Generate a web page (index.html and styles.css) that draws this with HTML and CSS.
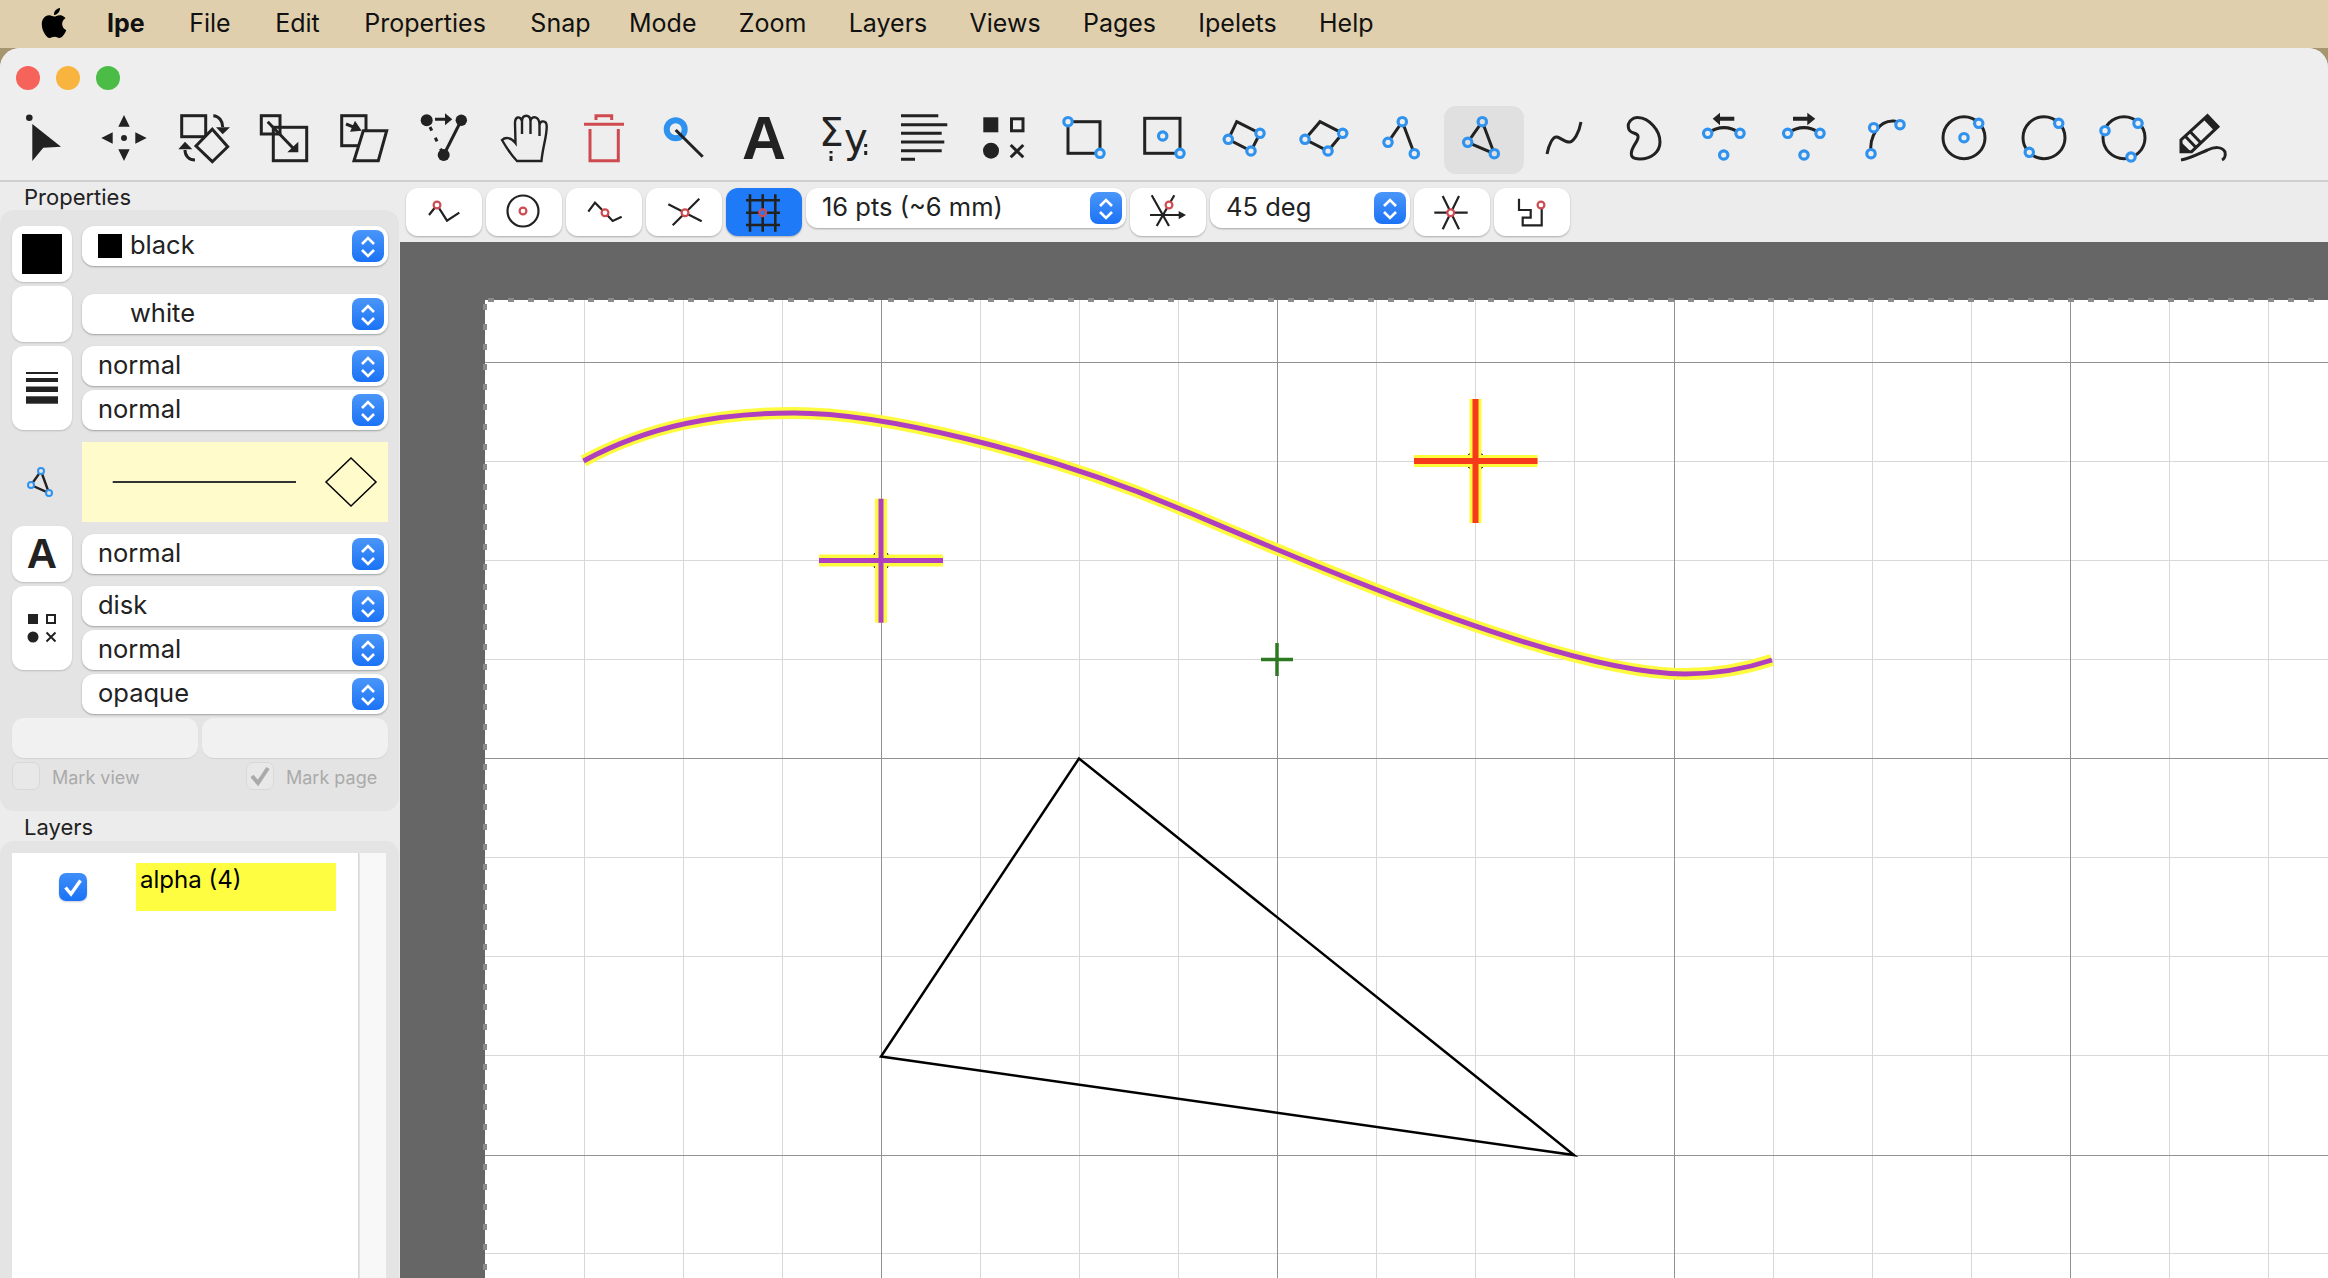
FILE: index.html
```html
<!DOCTYPE html>
<html lang="en">
  <head>
    <title>Ipe</title>
    <link rel="stylesheet" href="styles.css">
  </head>

  <body>
    <svg class="defs" width="0" height="0">
      <symbol id="chev" viewBox="0 0 32 32">
        <path d="M10 14 L16 8 L22 14 M10 20 L16 26 L22 20" fill="none" stroke="#fff" stroke-width="2.6"/>
      </symbol>
    </svg>

    <header class="menubar">
      <svg class="apple" viewBox="0 0 24 24"><path fill="#000" d="M12.152 6.896c-.948 0-2.415-1.078-3.96-1.04-2.04.027-3.91 1.183-4.961 3.014-2.117 3.675-.546 9.103 1.519 12.09 1.013 1.454 2.208 3.09 3.792 3.039 1.52-.065 2.09-.987 3.935-.987 1.831 0 2.35.987 3.96.948 1.637-.026 2.676-1.48 3.676-2.948 1.156-1.688 1.636-3.325 1.662-3.415-.039-.013-3.182-1.221-3.22-4.857-.026-3.04 2.48-4.494 2.597-4.559-1.429-2.09-3.623-2.324-4.39-2.376-2-.156-3.675 1.09-4.61 1.09zM15.53 3.83c.843-1.012 1.4-2.427 1.245-3.83-1.207.052-2.662.805-3.532 1.818-.78.896-1.454 2.338-1.273 3.714 1.338.104 2.715-.688 3.559-1.701"/></svg>
      <span class="menu-app">Ipe</span>
      <span>File</span>
      <span>Edit</span>
      <span>Properties</span>
      <span>Snap</span>
      <div class="menu-rest">
        <span>Mode</span>
        <span>Zoom</span>
        <span>Layers</span>
        <span>Views</span>
        <span>Pages</span>
        <span>Ipelets</span>
        <span>Help</span>
      </div>
    </header>

    <div class="window">
      <div class="titlebar">
        <i class="light red"></i>
        <i class="light amber"></i>
        <i class="light green"></i>
      </div>

      <div class="toolbar">
        <!-- select -->
        <svg class="tool" viewBox="0 0 80 68"><circle class="fill" cx="25.3" cy="11.7" r="3.3"/><path class="fill" d="M28.3 18 L57 40.7 L39.3 41.7 L28.3 55Z"/></svg>
        <!-- translate -->
        <svg class="tool" viewBox="0 0 80 68"><path class="fill" d="M40 9 L34.3 20.7 H45.7Z M34.3 43.3 H45.7 L40 55Z M17.3 32 L28.7 26.3 V37.7Z M62.7 32 L51.3 26.3 V37.7Z"/><circle class="fill" cx="40" cy="32" r="3"/></svg>
        <!-- rotate -->
        <svg class="tool" viewBox="0 0 80 68"><rect class="ln" x="17.7" y="9.7" width="24" height="21"/><path class="ln back" d="M48.3 23.3 L63.7 40.7 L48.3 55.7 L32 40Z"/><path class="ln" d="M49.3 9.7 C55 10 58.7 15 58.7 21 M31 54 C25 54 21 50 21 44"/><path class="fill" d="M52 21.3 H66 L58.7 28.3Z M14.3 43.3 H28.3 L21 35.7Z"/></svg>
        <!-- stretch -->
        <svg class="tool" viewBox="0 0 80 68"><rect class="ln" x="17.3" y="9.7" width="18.7" height="18.3"/><rect class="ln" x="29.3" y="21.3" width="33.4" height="33.4"/><path class="ln" d="M23.7 15.7 L49 42"/><path class="fill" d="M54.3 35.7 V46.3 H43.3Z"/></svg>
        <!-- shear -->
        <svg class="tool" viewBox="0 0 80 68"><rect class="ln" x="17.7" y="9.7" width="24.3" height="30"/><path class="ln back" d="M39.3 24.7 H62.7 L54.3 54.7 H30Z"/><path class="ln" d="M22 18 L32.7 22.3"/><path class="fill" d="M31 14.7 L37.7 24.7 L26 25.7Z"/></svg>
        <!-- graph -->
        <svg class="tool" viewBox="0 0 80 68"><circle class="fill" cx="22.7" cy="14.3" r="6"/><circle class="fill" cx="57.3" cy="14.3" r="5.7"/><circle class="fill" cx="39.7" cy="49" r="6"/><path class="ln" d="M57.3 14.3 L39.7 49"/><path class="ln" stroke-dasharray="4 8" d="M26 21 L39.7 49"/><path class="ln" d="M31 13.3 H42"/><path class="fill" d="M41 7.3 L48.3 13.3 L41 19.3Z"/></svg>
        <!-- pan -->
        <svg class="tool" viewBox="0 0 80 68"><path class="ln thin" d="M33 55 H57.5 C58.5 42 63 30 62.7 20 C62.5 14 56 14 55.5 19 C55.5 10 47.5 9 46.5 15 C46 8 38.5 8 38 15 C36 9 31 11 31 17 L31.5 37 C27 31 21 31 18 34 C22 41 27 49 33 55Z M38 15 V28 M46.5 15 V28 M55.5 19 V30"/></svg>
        <!-- delete -->
        <svg class="tool" viewBox="0 0 80 68"><path class="ln trash" d="M32 14 V9.7 H47.7 V14 M20 18.3 H60 M26 23 V54.7 H54.3 V23"/></svg>
        <!-- magnify -->
        <svg class="tool" viewBox="0 0 80 68"><circle class="ring" cx="31.7" cy="23.3" r="9"/><path class="ln" d="M31.7 24 L58.7 50.7"/></svg>
        <!-- label -->
        <div class="tool tool-a">A</div>
        <!-- math -->
        <svg class="tool" viewBox="0 0 80 68"><text class="glyph-sum" x="15" y="40">Σ</text><text class="glyph-y" x="40" y="46">y</text><path class="ln" d="M27 45 V47.5 M27 50 V55 M61.7 38 V41 M61.7 45 V49"/></svg>
        <!-- paragraph -->
        <svg class="tool" viewBox="0 0 80 68"><path class="ln" d="M17 9.7 H54.3 M17 18.7 H63.3 M17 27.3 H57.7 M17 36 H60.3 M17 44.7 H57.7 M17 53.3 H31"/></svg>
        <!-- marks -->
        <svg class="tool" viewBox="0 0 80 68"><rect class="fill" x="19.3" y="11.3" width="15" height="15"/><rect class="ln" x="47.5" y="12.8" width="11.5" height="12"/><circle class="fill" cx="27" cy="44.7" r="8"/><path class="ln" d="M46.7 39 L59.3 51.3 M59.3 39 L46.7 51.3"/></svg>
        <!-- rectangle -->
        <svg class="tool" viewBox="0 0 80 68"><rect class="ln" x="24" y="15.7" width="32" height="31.6"/><circle class="node" cx="24" cy="15.7" r="4.2"/><circle class="node" cx="56" cy="47.3" r="4.2"/></svg>
        <!-- box from center -->
        <svg class="tool" viewBox="0 0 80 68"><rect class="ln" x="20.7" y="12.3" width="35.3" height="35"/><circle class="node" cx="38.7" cy="30" r="4.2"/><circle class="node" cx="56" cy="47.3" r="4.2"/></svg>
        <!-- parallelogram -->
        <svg class="tool" viewBox="0 0 80 68"><path class="ln" d="M32.7 15.7 L56 27.3 L47 45 L24.3 33.3Z"/><circle class="node" cx="56" cy="27.3" r="4.2"/><circle class="node" cx="47" cy="45" r="4.2"/><circle class="node" cx="24.3" cy="33.3" r="4.2"/></svg>
        <!-- parallelogram 2 -->
        <svg class="tool" viewBox="0 0 80 68"><path class="ln" d="M36 15.7 L58.7 27.3 L44 45 L21 33.3Z"/><circle class="node" cx="58.7" cy="27.3" r="4.2"/><circle class="node" cx="44" cy="45" r="4.2"/><circle class="node" cx="21" cy="33.3" r="4.2"/></svg>
        <!-- polyline -->
        <svg class="tool" viewBox="0 0 80 68"><path class="ln" d="M24 36.3 L38.3 15.7 L50.3 47.7"/><circle class="node" cx="24" cy="36.3" r="4.2"/><circle class="node" cx="38.3" cy="15.7" r="4.2"/><circle class="node" cx="50.3" cy="47.7" r="4.2"/></svg>
        <!-- polygon, current mode -->
        <svg class="tool current" viewBox="0 0 80 68"><path class="ln" d="M38.3 15.7 L50.3 47.7 L23.7 36.3Z"/><circle class="node" cx="38.3" cy="15.7" r="4.2"/><circle class="node" cx="50.3" cy="47.7" r="4.2"/><circle class="node" cx="23.7" cy="36.3" r="4.2"/></svg>
        <!-- spline -->
        <svg class="tool" viewBox="0 0 80 68"><path class="ln" d="M23 48 C25 38 29 30 33 31 C37 32 42 37 46 36 C50 35 55 27 57 16"/></svg>
        <!-- splinegon -->
        <svg class="tool" viewBox="0 0 80 68"><path class="ln" d="M24.5 22 C23 16 29 11 34 11.5 C45 12 56 24 56 36 C56 47 46 53 36 53 C28 53 26 50 28 44 C30 38 35 34 34 30 C33 26 25 28 24.5 22Z"/></svg>
        <!-- arc left -->
        <svg class="tool" viewBox="0 0 80 68"><path class="fill" d="M28.7 12.7 L36 6.7 V10.7 H50.3 V14.7 H36 V19.3Z"/><path class="ln" d="M23.7 27.3 Q40 16 56 27.3"/><circle class="node" cx="23.7" cy="27.3" r="4.2"/><circle class="node" cx="56" cy="27.3" r="4.2"/><circle class="node" cx="39.7" cy="49" r="4.2"/></svg>
        <!-- arc right -->
        <svg class="tool" viewBox="0 0 80 68"><path class="fill" d="M51.3 12.7 L43.3 6.7 V10.7 H29 V14.7 H43.3 V19.3Z"/><path class="ln" d="M23.7 27.3 Q40 16 56 27.3"/><circle class="node" cx="23.7" cy="27.3" r="4.2"/><circle class="node" cx="56" cy="27.3" r="4.2"/><circle class="node" cx="40" cy="49" r="4.2"/></svg>
        <!-- arc three points -->
        <svg class="tool" viewBox="0 0 80 68"><path class="ln" d="M27 47.7 C25 30 35 14 50 15 Q54 15.3 56 18.7"/><circle class="node" cx="27" cy="47.7" r="4.2"/><circle class="node" cx="29.7" cy="21.7" r="4.2"/><circle class="node" cx="56" cy="18.7" r="4.2"/></svg>
        <!-- circle center -->
        <svg class="tool" viewBox="0 0 80 68"><circle class="ln" cx="40" cy="31.7" r="21"/><circle class="node" cx="40" cy="31.7" r="4.2"/><circle class="node" cx="54.7" cy="17.3" r="4.2"/></svg>
        <!-- circle diameter -->
        <svg class="tool" viewBox="0 0 80 68"><circle class="ln" cx="40" cy="31.7" r="21"/><circle class="node" cx="54.7" cy="17.3" r="4.2"/><circle class="node" cx="25.3" cy="46.3" r="4.2"/></svg>
        <!-- circle three points -->
        <svg class="tool" viewBox="0 0 80 68"><circle class="ln" cx="40" cy="31.7" r="21"/><circle class="node" cx="21" cy="24.7" r="4.2"/><circle class="node" cx="54" cy="17.3" r="4.2"/><circle class="node" cx="47" cy="51" r="4.2"/></svg>
        <!-- ink -->
        <svg class="tool" viewBox="0 0 80 68"><path class="ln" d="M17 45.7 V34 L43.5 9.7 L54 20.7 L27.6 45.7Z"/><path class="fill" d="M17 45.7 V36 L27 45.7Z M39.5 13.5 L43.5 9.7 L54 20.7 L50 24.5Z"/><path class="ln" d="M21.5 30.5 L31.5 41 M26.5 26 L36.5 36.5"/><path class="ln" d="M17 54 C28 52 36 47 43.5 44 C50 41 58 40 61 46 C62 50 60 53 58 54"/></svg>
      </div>

      <div class="body">
        <aside class="dock">
          <h2 class="dock-title">Properties</h2>
          <section class="panel props">
            <div class="row">
              <button class="pick"><i class="swatch"></i></button>
              <div class="combo"><i class="mini-swatch"></i><span>black</span><svg class="stepper"><use href="#chev"/></svg></div>
            </div>
            <div class="row middle">
              <button class="pick"></button>
              <div class="combo"><i class="mini-swatch none"></i><span>white</span><svg class="stepper"><use href="#chev"/></svg></div>
            </div>
            <div class="row">
              <button class="pick tall">
                <svg width="32" height="32" viewBox="0 0 32 32"><rect class="fill" y="0" width="32" height="2"/><rect class="fill" y="6" width="32" height="4"/><rect class="fill" y="14.5" width="32" height="5.5"/><rect class="fill" y="24.3" width="32" height="7.4"/></svg>
              </button>
              <div class="combos">
                <div class="combo"><span>normal</span><svg class="stepper"><use href="#chev"/></svg></div>
                <div class="combo"><span>normal</span><svg class="stepper"><use href="#chev"/></svg></div>
              </div>
            </div>
            <div class="row path-row">
              <div class="mode-icon">
                <svg width="60" height="80" viewBox="0 0 60 80"><path class="ln thin" d="M29 29 L37 51 L19 43Z"/><circle class="node small" cx="29" cy="29" r="3"/><circle class="node small" cx="19" cy="43" r="3"/><circle class="node small" cx="37" cy="51" r="3"/></svg>
              </div>
              <svg class="path-view" viewBox="0 0 306 80"><path d="M30.7 40 H214" stroke="#333" stroke-width="2"/><path d="M269 16 L294 40 L269 64 L244 40Z" fill="none" stroke="#000" stroke-width="1.5"/></svg>
            </div>
            <div class="row middle">
              <button class="pick"><span class="pick-a">A</span></button>
              <div class="combo"><span>normal</span><svg class="stepper"><use href="#chev"/></svg></div>
            </div>
            <div class="row">
              <button class="pick tall">
                <svg width="32" height="32" viewBox="0 0 32 32"><rect class="fill" x="2" y="2" width="10" height="10"/><rect x="21" y="3" width="8" height="8" fill="none" stroke="#222" stroke-width="2"/><circle class="fill" cx="7" cy="25" r="5.5"/><path d="M20.5 20.5 L29.5 29.5 M29.5 20.5 L20.5 29.5" stroke="#222" stroke-width="2" fill="none"/></svg>
              </button>
              <div class="combos">
                <div class="combo"><span>disk</span><svg class="stepper"><use href="#chev"/></svg></div>
                <div class="combo"><span>normal</span><svg class="stepper"><use href="#chev"/></svg></div>
                <div class="combo"><span>opaque</span><svg class="stepper"><use href="#chev"/></svg></div>
              </div>
            </div>
            <div class="row flat">
              <button class="blank"></button>
              <button class="blank"></button>
            </div>
            <div class="marks">
              <label class="mark"><i class="check-off"></i><span>Mark view</span></label>
              <label class="mark"><i class="check-off"><svg width="28" height="28" viewBox="0 0 28 28"><path d="M6 14 L12 21 L22 6" fill="none" stroke="#aaa" stroke-width="4"/></svg></i><span>Mark page</span></label>
            </div>
          </section>

          <h2 class="dock-title layers-title">Layers</h2>
          <section class="panel layers">
            <div class="layer-list">
              <div class="layer">
                <i class="check-on"><svg width="28" height="28" viewBox="0 0 28 28"><path d="M6.5 14.5 L12 21 L21.5 7.5" fill="none" stroke="#fff" stroke-width="3.4"/></svg></i>
                <span class="layer-name">alpha (4)</span>
              </div>
            </div>
            <div class="layer-track"></div>
          </section>
        </aside>

        <main class="main">
          <div class="snapbar">
            <button class="snap">
              <svg viewBox="0 0 76 48"><path class="ln snapln" d="M23 27 L31 17 L41 32.7 L53.3 24.7"/><circle class="rnode" cx="31" cy="17" r="3.4"/></svg>
            </button>
            <button class="snap">
              <svg viewBox="0 0 76 48"><circle class="ln snapln" cx="37" cy="23" r="15.5"/><circle class="rnode" cx="37" cy="23" r="3.4"/></svg>
            </button>
            <button class="snap">
              <svg viewBox="0 0 76 48"><path class="ln snapln" d="M22.3 23.7 L29 14.7 L39 24.7 L46.7 33 L55.7 28.7"/><circle class="rnode" cx="39" cy="24.7" r="3.4"/></svg>
            </button>
            <button class="snap">
              <svg viewBox="0 0 76 48"><path class="ln snapln" d="M22.3 16.3 L55.7 33.3 M26.7 37.3 L53.3 10.7"/><circle class="rnode" cx="39" cy="24.7" r="3.4"/></svg>
            </button>
            <button class="snap on">
              <svg viewBox="0 0 76 48"><path class="ln grid-icon" d="M24 6.3 V43.7 M36.7 6.3 V43.7 M49.3 6.3 V43.7 M20 12.3 H54 M20 24.7 H54 M20 37 H54"/><circle class="rnode blue" cx="36.7" cy="24.7" r="3.4"/></svg>
            </button>
            <div class="combo grid-size"><span>16 pts (~6 mm)</span><svg class="stepper"><use href="#chev"/></svg></div>
            <button class="snap">
              <svg viewBox="0 0 76 48"><path class="ln snapln" d="M21.7 7.3 L39 38 M44.3 7.3 L26.7 38 M20 27 H49"/><path class="fill" d="M48.7 23 L56 27 L48.7 31.3Z"/><circle class="rnode" cx="39" cy="17" r="3.4"/></svg>
            </button>
            <div class="combo angle"><span>45 deg</span><svg class="stepper"><use href="#chev"/></svg></div>
            <button class="snap">
              <svg viewBox="0 0 76 48"><path class="ln snapln" d="M28.7 8 L45 41.3 M45 8 L28.7 41.3 M20.3 24.7 H53.7"/><circle class="rnode" cx="36.7" cy="24.7" r="3.4"/></svg>
            </button>
            <button class="snap">
              <svg viewBox="0 0 76 48"><path class="ln snapln" d="M25 10.7 V22 H36.7 V29.7 H28.7 V37.3 H47.7 V20"/><circle class="rnode" cx="47" cy="17" r="3.4"/></svg>
            </button>
          </div>

          <svg class="canvas" viewBox="400 242 1928 1036">
            <rect x="485" y="300" width="1843" height="978" fill="#fff"/>
            <!-- minor grid -->
            <path class="grid-minor" d="M584.5 300V1278M683.5 300V1278M782.5 300V1278M980.5 300V1278M1079.5 300V1278M1178.5 300V1278M1376.5 300V1278M1475.5 300V1278M1574.5 300V1278M1773.5 300V1278M1872.5 300V1278M1971.5 300V1278M2169.5 300V1278M2268.5 300V1278M485 461.5H2328M485 560.5H2328M485 659.5H2328M485 857.5H2328M485 956.5H2328M485 1055.5H2328M485 1253.5H2328"/>
            <!-- major grid -->
            <path class="grid-major" d="M881.5 300V1278M1277.5 300V1278M1674.5 300V1278M2070.5 300V1278M485 362.5H2328M485 758.5H2328M485 1155.5H2328"/>
            <!-- page edge -->
            <path class="page-edge" d="M488 300H2328M485 304V1278"/>

            <!-- triangle -->
            <path d="M1079 758.5 L881 1056.5 L1574 1155Z" fill="none" stroke="#000" stroke-width="2.5"/>

            <!-- selected spline -->
            <path class="halo" d="M583.5 461 C650 425 720 413 794 413 C880 413 1040 450 1178 508 C1300 559 1560 674 1685 674 C1715 674 1745 669 1772 660"/>
            <path class="sel-purple" d="M583.5 461 C650 425 720 413 794 413 C880 413 1040 450 1178 508 C1300 559 1560 674 1685 674 C1715 674 1745 669 1772 660"/>

            <!-- secondary mark -->
            <circle class="mark-ring" cx="881" cy="560.5" r="8.5"/>
            <path class="halo" d="M819 560.5 H943 M881 498.7 V622.7"/>
            <path class="sel-purple" d="M819 560.5 H943 M881 498.7 V622.7"/>

            <!-- primary mark -->
            <circle class="mark-ring" cx="1475.5" cy="461" r="8.5"/>
            <path class="halo" d="M1414 461 H1537.5 M1475.5 399 V523"/>
            <path class="sel-red" d="M1414 461 H1537.5 M1475.5 399 V523"/>

            <!-- snap cursor -->
            <path class="cursor" d="M1261 659.5 H1293 M1277 643 V676"/>
          </svg>
        </main>
      </div>
    </div>
  </body>
</html>
```

FILE: styles.css
```css
* {
  box-sizing: border-box;
}
html,
body {
  margin: 0;
  height: 100%;
  overflow: hidden;
}
body {
  background: #a59670;
  color: #222;
  font-family: Inter, "Noto Sans", sans-serif;
  display: flex;
  flex-direction: column;
}
.defs {
  position: absolute;
}
button {
  border: none;
  padding: 0;
  font: inherit;
}

/* menu bar */
.menubar {
  height: 48px;
  flex: none;
  background: #dfcfad;
  display: flex;
  align-items: center;
  gap: 44.5px;
  padding: 0 0 3px 39px;
  font-size: 25px;
  color: #111;
}
.apple {
  width: 30px;
  height: 30px;
  margin-right: -6.5px;
}
.menu-app {
  font-weight: 700;
}
.menu-rest {
  display: flex;
  gap: 42.3px;
  margin-left: -6px;
}

/* window frame */
.window {
  flex: 1;
  min-height: 0;
  display: flex;
  flex-direction: column;
  background: #ececec;
  border-radius: 20px 20px 0 0;
  overflow: hidden;
}
.titlebar {
  height: 58px;
  flex: none;
  background: #eee;
  display: flex;
  align-items: center;
  gap: 16px;
  padding: 2px 0 0 16px;
}
.light {
  width: 24px;
  height: 24px;
  border-radius: 50%;
}
.red {
  background: #f5635a;
}
.amber {
  background: #f9b33f;
}
.green {
  background: #4bbd47;
}

.toolbar {
  height: 76px;
  flex: none;
  background: #eee;
  border-bottom: 2px solid #cfcfcf;
  display: flex;
  padding-left: 4px;
}
.tool {
  width: 80px;
  height: 68px;
  flex: none;
  border-radius: 12px;
}
.tool.current {
  background: #e0e0e0;
}
.tool.current .node {
  fill: #e0e0e0;
}
.tool-a {
  font-family: "Liberation Sans", sans-serif;
  font-weight: 700;
  font-size: 61px;
  line-height: 64px;
  text-align: center;
  color: #222;
}

/* icon parts */
.ln {
  fill: none;
  stroke: #222;
  stroke-width: 3;
}
.ln.thin {
  stroke-width: 2.4;
}
.ln.back {
  fill: #eee;
}
.ln.trash {
  stroke: #cf4a50;
}
.ln.snapln {
  stroke-width: 2.2;
}
.ln.grid-icon {
  stroke-width: 2.6;
}
.fill {
  fill: #222;
}
.ring {
  fill: none;
  stroke: #2f92ee;
  stroke-width: 6;
}
.node {
  fill: #eee;
  stroke: #2f92ee;
  stroke-width: 3.2;
}
.node.small {
  fill: #e4e4e4;
  stroke-width: 2;
}
.rnode {
  fill: #fff;
  stroke: #cf4a50;
  stroke-width: 2.2;
}
.rnode.blue {
  fill: #1f7af8;
}
.glyph-sum {
  font-family: "DejaVu Sans", sans-serif;
  font-size: 39px;
  fill: #222;
}
.glyph-y {
  font-family: "DejaVu Sans", sans-serif;
  font-size: 40px;
  fill: #222;
}

.body {
  flex: 1;
  min-height: 0;
  display: flex;
}

/* left dock */
.dock {
  width: 400px;
  flex: none;
  display: flex;
  flex-direction: column;
}
.dock-title {
  margin: 0;
  height: 28px;
  padding: 1px 0 0 24px;
  font-size: 22px;
  font-weight: 400;
  line-height: 28px;
  color: #222;
}
.panel {
  background: #e4e4e4;
  border-radius: 14px 14px 0 0;
  margin-right: 1px;
}
.props {
  height: 601px;
  padding: 16px 11px 0 12px;
  border-radius: 14px;
}
.row {
  display: flex;
  align-items: flex-start;
  gap: 10px;
  margin-bottom: 4px;
}
.row.middle {
  align-items: center;
}
.pick {
  width: 60px;
  height: 56px;
  flex: none;
  background: #fff;
  border-radius: 12px;
  box-shadow: 0 1px 2px rgba(0, 0, 0, 0.18);
  display: flex;
  align-items: center;
  justify-content: center;
}
.pick.tall {
  height: 84px;
}
.swatch {
  width: 40px;
  height: 40px;
  background: #000;
}
.pick-a {
  font-family: "Liberation Sans", sans-serif;
  font-weight: 700;
  font-size: 42px;
  line-height: 1;
  color: #222;
}
.combos {
  flex: 1;
  display: flex;
  flex-direction: column;
  gap: 4px;
}
.combo {
  flex: 1;
  height: 40px;
  background: #fff;
  border-radius: 12px;
  box-shadow: 0 1px 2px rgba(0, 0, 0, 0.3);
  display: flex;
  align-items: center;
  padding: 0 4px 0 16px;
  font-size: 25.5px;
  color: #222;
}
.combos .combo {
  flex: none;
}
.combo span {
  flex: 1;
  line-height: 36px;
  padding-bottom: 2px;
}
.mini-swatch {
  width: 24px;
  height: 24px;
  background: #000;
  margin-right: 8px;
  margin-top: 0;
}
.mini-swatch.none {
  background: none;
}
.stepper {
  width: 32px;
  height: 32px;
  flex: none;
  border-radius: 8px;
  background: linear-gradient(#4a96f8, #1a72f6);
}
.path-row {
  margin-top: 12px;
}
.mode-icon {
  width: 60px;
  height: 80px;
  flex: none;
}
.path-view {
  width: 306px;
  height: 80px;
  flex: none;
  background: #fffbcb;
}
.flat {
  gap: 4px;
}
.blank {
  flex: 1;
  height: 40px;
  background: #f1f1f1;
  border-radius: 12px;
  box-shadow: 0 1px 1px rgba(0, 0, 0, 0.08);
}
.marks {
  display: flex;
}
.mark {
  width: 234px;
  display: flex;
  align-items: center;
  gap: 12px;
  font-size: 18px;
  color: #aaa;
}
.mark span {
  padding-top: 2px;
}
.mark:last-child {
  width: auto;
}
.check-off {
  width: 28px;
  height: 28px;
  flex: none;
  background: #e8e8e8;
  border: 1px solid #d8d8d8;
  border-radius: 7px;
  display: block;
}
.check-off svg {
  display: block;
  margin: -1px;
}

.layers-title {
  height: 29px;
  margin-top: 1px;
}
.layers {
  flex: 1;
  min-height: 0;
  display: flex;
  padding: 12px 13px 0 12px;
}
.layer-list {
  width: 347px;
  background: #fff;
  border-right: 1px solid #d8d8d8;
  padding: 10px 0 0 47px;
}
.layer-track {
  flex: 1;
  margin-left: 1px;
  background: #f8f8f8;
}
.layer {
  display: flex;
  align-items: center;
  gap: 49px;
}
.check-on {
  width: 28px;
  height: 28px;
  flex: none;
  border-radius: 7px;
  background: linear-gradient(#3f8ff8, #1a72f6);
  display: block;
  box-shadow: 0 1px 2px rgba(0, 0, 0, 0.2);
}
.check-on svg {
  display: block;
}
.layer-name {
  width: 200px;
  height: 48px;
  background: #fffd42;
  color: #000;
  font-size: 24px;
  line-height: 34px;
  padding-left: 4px;
}

/* snap bar and canvas */
.main {
  flex: 1;
  min-width: 0;
  display: flex;
  flex-direction: column;
}
.snapbar {
  height: 60px;
  flex: none;
  display: flex;
  align-items: flex-start;
  gap: 4px;
  padding: 6px 0 0 6px;
}
.snap {
  width: 76px;
  height: 48px;
  flex: none;
  background: #fff;
  border-radius: 12px;
  box-shadow: 0 1px 2px rgba(0, 0, 0, 0.28);
}
.snap svg {
  display: block;
  width: 76px;
  height: 48px;
}
.snap.on {
  background: #1f7af8;
}
.grid-size {
  flex: none;
  width: 320px;
}
.angle {
  flex: none;
  width: 200px;
}
.canvas {
  flex: 1;
  min-height: 0;
  display: block;
  width: 100%;
  background: #666;
}
.grid-minor {
  fill: none;
  stroke: #d8d8d8;
  stroke-width: 1;
}
.grid-major {
  fill: none;
  stroke: #929292;
  stroke-width: 1;
}
.page-edge {
  fill: none;
  stroke: #8a8a8a;
  stroke-width: 4;
  stroke-dasharray: 6 14;
}
.halo {
  fill: none;
  stroke: #fefa3e;
  stroke-width: 12;
}
.sel-purple {
  fill: none;
  stroke: #b03fc0;
  stroke-width: 5;
}
.sel-red {
  fill: none;
  stroke: #f53b1c;
  stroke-width: 6;
}
.mark-ring {
  fill: none;
  stroke: #000;
  stroke-width: 2.5;
}
.cursor {
  fill: none;
  stroke: #2e7a23;
  stroke-width: 3.5;
}
```
